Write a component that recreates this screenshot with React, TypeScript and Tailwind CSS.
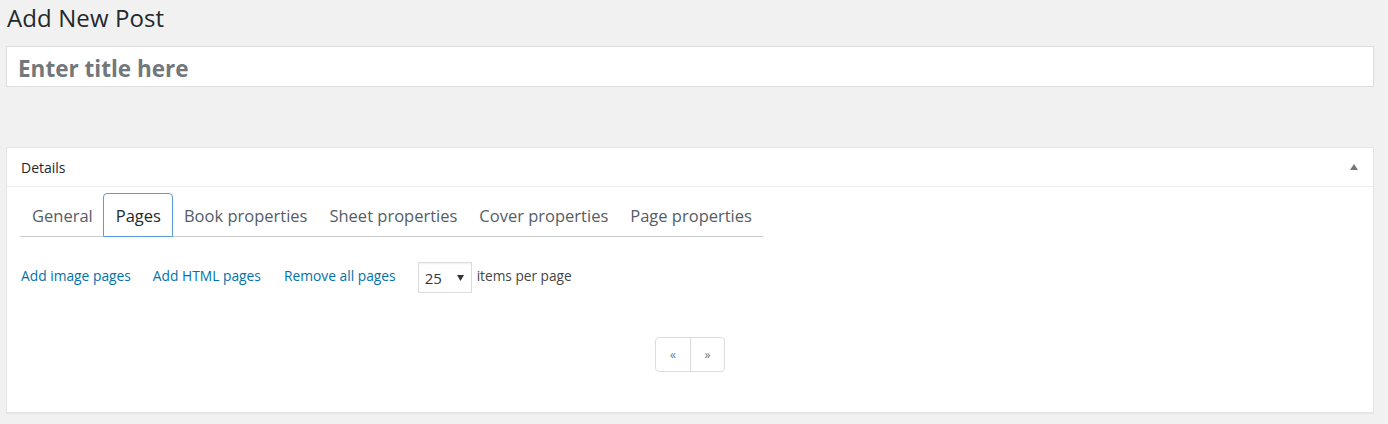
import React from "react";

export default function App() {
  const font = { fontFamily: '"Open Sans", "Noto Sans", sans-serif' };
  const tab = "shrink-0 whitespace-nowrap h-[43px] px-[11px] pt-[3px] flex items-center text-[16.5px] text-[#555d66]";
  return (
    <div className="w-[1388px] h-[424px] bg-[#f1f1f1] overflow-hidden" style={font}>
      <div className="pl-[6px] pr-[14px]">
        <h1 className="h-[36px] pl-[1px] pt-[3px] text-[24px] leading-[29px] text-[#23282d] font-normal tracking-[0.1px]">
          Add New Post
        </h1>
        <div className="mt-[10px] h-[41px] bg-white border border-[#dddddd] flex items-center pl-[11px] pt-[5px]">
          <span className="text-[22.5px] font-bold text-[#72777c]">Enter title here</span>
        </div>
        <div className="mt-[60px] h-[266px] bg-white border border-[#e5e5e5] shadow-[0_1px_1px_rgba(0,0,0,0.04)]">
          <div className="h-[39px] border-b border-[#eeeeee] flex items-center justify-between pl-[14px] pr-[14px]">
            <span className="text-[14px] text-[#23282d]">Details</span>
            <svg width="10" height="8" viewBox="0 0 10 8">
              <path d="M5 1 L9 7 L1 7 Z" fill="#72777c" />
            </svg>
          </div>
          <div className="pl-[13px]">
            <div className="mt-[6px] w-[743px] h-[44px] border-b border-[#cccccc] flex items-end">
              <div className="shrink-0 whitespace-nowrap h-[43px] pl-[12px] pr-[10px] pt-[3px] flex items-center text-[16.5px] text-[#555d66]">General</div>
              <div className="shrink-0 whitespace-nowrap h-[44px] -mb-px pl-[12px] pr-[11px] pt-[3px] flex items-center text-[16.5px] text-[#23282d] border border-[#5b9dd9] rounded-t-[4px] bg-white">Pages</div>
              <div className={tab}>Book properties</div>
              <div className={tab}>Sheet properties</div>
              <div className={tab}>Cover properties</div>
              <div className={tab}>Page properties</div>
            </div>
            <div className="mt-[25px] pl-[1px] flex items-center h-[31px] text-[13.8px] whitespace-nowrap">
              <span className="text-[#0073aa] -mt-[2px]">Add image pages</span>
              <span className="ml-[22px] text-[#0073aa] -mt-[2px]">Add HTML pages</span>
              <span className="ml-[23px] text-[#0073aa] -mt-[2px]">Remove all pages</span>
              <div className="ml-[22px] w-[54px] h-[31px] border border-[#dddddd] flex items-center justify-between pl-[6px] pr-[7px] shadow-[inset_0_1px_2px_rgba(0,0,0,0.07)]">
                <span className="text-[15px] text-[#32373c] mt-[2px]">25</span>
                <svg width="7" height="6" viewBox="0 0 7 6">
                  <path d="M0 0 L7 0 L3.5 6 Z" fill="#32373c" />
                </svg>
              </div>
              <span className="ml-[5px] text-[#444444] -mt-[2px] text-[13.7px]">items per page</span>
            </div>
            <div className="mt-[44px] flex justify-center pr-[13px]">
              <div className="flex border border-[#dddddd] rounded-[4px] h-[35px]">
                <div className="w-[35px] flex items-center justify-center text-[12px] text-[#72777c] border-r border-[#dddddd]">«</div>
                <div className="w-[33px] flex items-center justify-center text-[12px] text-[#72777c]">»</div>
              </div>
            </div>
          </div>
        </div>
      </div>
    </div>
  );
}
